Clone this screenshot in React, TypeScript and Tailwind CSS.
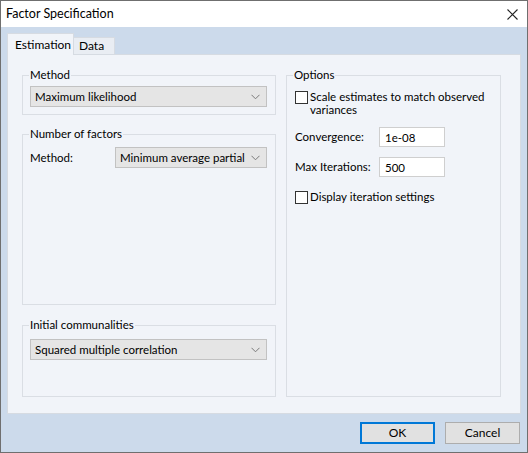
function Chevron() {
  return (
    <svg width="9" height="6" viewBox="0 0 9 6" fill="none" stroke="#7a7a7a" strokeWidth="1">
      <path d="M0.5 0.8 L4.5 4.8 L8.5 0.8" />
    </svg>
  )
}

function Select({ value, className }: { value: string; className: string }) {
  return (
    <div
      className={`flex h-[21px] items-center justify-between whitespace-nowrap border border-[#c2c2c2] bg-[#e5e5e5] pl-[4px] pr-[6px] ${className}`}
    >
      <span>{value}</span>
      <Chevron />
    </div>
  )
}

function Group({ title, className, children }: { title: string; className: string; children?: React.ReactNode }) {
  return (
    <fieldset className={`min-w-0 border border-[#dadee4] pl-[7px] pr-[8px] ${className}`}>
      <legend className="-ml-[1px] px-[1px] leading-[16px]">{title}</legend>
      {children}
    </fieldset>
  )
}

function Checkbox() {
  return <div className="mt-[1px] h-[13px] w-[13px] shrink-0 border border-[#333] bg-white" />
}

export default function App() {
  return (
    <div
      className="flex h-[453px] w-[528px] flex-col border border-[#6f6f6f] text-[11.5px] text-black"
      style={{ fontFamily: 'Lato, "Noto Sans", sans-serif' }}
    >
      {/* title bar */}
      <div className="flex h-[26px] items-center justify-between bg-white pl-[5px] pr-[9px]">
        <span className="text-[12.5px]">Factor Specification</span>
        <svg width="11" height="11" viewBox="0 0 11 11" stroke="#222" strokeWidth="1.1">
          <path d="M0.5 0.5 L10.5 10.5 M10.5 0.5 L0.5 10.5" />
        </svg>
      </div>

      <div className="flex flex-1 flex-col bg-[#ccdaeb] px-[6px] pt-[6px]">
        {/* tabs */}
        <div className="flex h-[21px] items-end text-[12px]">
          <div className="relative z-10 -mb-px flex h-[22px] w-[67px] items-center border border-b-0 border-[#d6dbe2] bg-[#f1f4f9] pl-[7px]">
            Estimation
          </div>
          <div className="flex h-[17px] w-[41px] items-center border border-b-0 border-l-0 border-[#d6dbe2] bg-[#e9edf3] pl-[5px]">
            Data
          </div>
        </div>

        {/* tab page */}
        <div className="flex h-[360px] gap-[10px] border border-[#d6dbe2] bg-[#f1f4f9] pl-[14px] pt-[12px]">
          <div className="flex w-[254px] flex-col">
            <Group title="Method" className="h-[48px]">
              <Select value="Maximum likelihood" className="mt-[3px] w-[237px]" />
            </Group>

            <Group title="Number of factors" className="mt-[11px] h-[179px]">
              <div className="mt-[5px] flex items-center">
                <span className="w-[85px]">Method:</span>
                <Select value="Minimum average partial" className="w-[152px]" />
              </div>
            </Group>

            <Group title="Initial communalities" className="mt-[12px] h-[80px]">
              <Select value="Squared multiple correlation" className="mt-[6px] w-[237px]" />
            </Group>
          </div>

          <fieldset className="h-[330px] w-[215px] min-w-0 border border-[#dadee4] pl-[8px] pr-[4px]">
            <legend className="-ml-[2px] px-[1px] leading-[16px]">Options</legend>

            <div className="mt-[7px] flex gap-[2px] leading-[13px]">
              <Checkbox />
              <span className="whitespace-nowrap">
                Scale estimates to match observed
                <br />
                variances
              </span>
            </div>

            <div className="mt-[11px] flex items-center">
              <span className="w-[84px] whitespace-nowrap">Convergence:</span>
              <div className="flex h-[20px] w-[66px] items-center border border-[#cfcfcf] bg-white pl-[5px] pt-[1px]">
                1e-08
              </div>
            </div>

            <div className="mt-[10px] flex items-center">
              <span className="w-[84px] whitespace-nowrap">Max Iterations:</span>
              <div className="flex h-[20px] w-[66px] items-center border border-[#cfcfcf] bg-white pl-[5px] pt-[2px]">
                500
              </div>
            </div>

            <div className="mt-[11px] flex items-center gap-[2px]">
              <Checkbox />
              <span>Display iteration settings</span>
            </div>
          </fieldset>
        </div>

        {/* buttons */}
        <div className="mt-[8px] flex justify-end gap-[10px] pr-[1px] text-[12px]">
          <button className="h-[22px] w-[75px] border-2 border-[#0078d7] bg-[#e1e1e1]">OK</button>
          <button className="h-[22px] w-[75px] border border-[#adadad] bg-[#e1e1e1]">Cancel</button>
        </div>
      </div>
    </div>
  )
}
